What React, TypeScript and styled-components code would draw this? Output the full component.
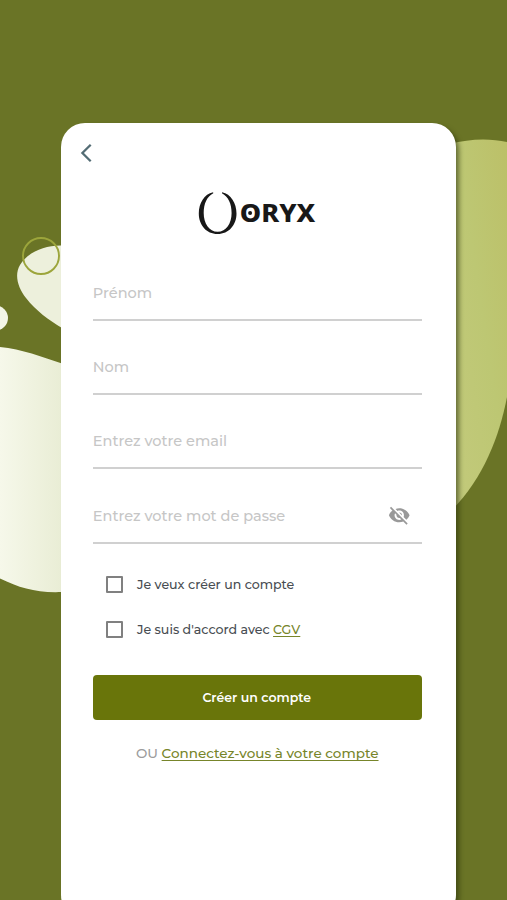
import React, { useState } from "react";
import styled, { createGlobalStyle } from "styled-components";

const GlobalStyle = createGlobalStyle`
  * { box-sizing: border-box; }
  body { margin: 0; overflow: hidden; }
  button, input { font-family: inherit; }
`;

const Page = styled.main`
  position: relative;
  width: 507px;
  height: 900px;
  overflow: hidden;
  background: #6a7426;
  padding: 122.6px 51.3px 0 61.3px;
  font-family: Montserrat, Inter, sans-serif;
`;

const Backdrop = styled.svg`
  position: absolute;
  inset: 0;
`;

const Card = styled.section`
  position: relative;
  display: flex;
  flex-direction: column;
  height: 796px;
  padding: 18.4px 34px 0 31.5px;
  border-radius: 24px;
  background: #fff;
  box-shadow: 4px 3px 5px -1px rgba(40, 48, 10, 0.6);
`;

const BackButton = styled.button`
  display: flex;
  width: 24px;
  height: 24px;
  margin-left: -19.3px;
  padding: 0;
  border: 0;
  background: none;
`;

const Logo = styled.svg`
  display: block;
  align-self: center;
  flex: none;
  margin: 26px 0 11.5px 1px;
`;

const Form = styled.form`
  display: flex;
  flex-direction: column;
`;

const Field = styled.label`
  display: flex;
  align-items: center;
  height: 74.3px;
  padding: 20px 11px 0 0;
  border-bottom: 2px solid #d0d0d0;
`;

const Input = styled.input`
  flex: 1;
  min-width: 0;
  padding: 0;
  border: 0;
  outline: 0;
  background: none;
  font-size: 14.5px;
  font-weight: 500;
  line-height: 20px;
  &::placeholder {
    color: #c6c6c6;
    opacity: 1;
  }
`;

const Checks = styled.div`
  display: flex;
  flex-direction: column;
  gap: 24.5px;
  padding: 31px 0 0 13.7px;
`;

const CheckRow = styled.label`
  display: flex;
  align-items: center;
  height: 20px;
  gap: 13.5px;
  color: #484d52;
  font-size: 12.6px;
  font-weight: 500;
  white-space: pre;
`;

const Box = styled.input`
  appearance: none;
  width: 17px;
  height: 17px;
  margin: 0;
  border: 2px solid #808080;
  border-radius: 1px;
`;

const Link = styled.a`
  color: #77852a;
  text-decoration: underline;
  text-decoration-thickness: 1px;
  text-underline-offset: 1.5px;
`;

const Submit = styled.button`
  height: 45px;
  margin-top: 35.5px;
  padding: 1px 1px 0 0;
  border: 0;
  border-radius: 4px;
  background: #69750a;
  color: #fff;
  font-size: 12.5px;
  font-weight: 600;
`;

const Footer = styled.p`
  margin: 23.5px 0 0;
  text-align: center;
  color: #9c9c9c;
  font-size: 13.5px;
  font-weight: 500;
  line-height: 20px;
  white-space: nowrap;
`;

const fields = ["Prénom", "Nom", "Entrez votre email", "Entrez votre mot de passe"];

const Shapes = () => (
  <Backdrop width="507" height="900" viewBox="0 0 507 900" aria-hidden="true">
    <defs>
      <linearGradient id="pale" x1="0" x2="1">
        <stop offset="0" stopColor="#f6f8ea" />
        <stop offset="1" stopColor="#e9edd5" />
      </linearGradient>
      <linearGradient id="lime" x1="0" y1="1" x2="1" y2="0">
        <stop offset="0" stopColor="#c3ca7c" />
        <stop offset="0.55" stopColor="#bdc773" />
        <stop offset="1" stopColor="#bcc068" />
      </linearGradient>
    </defs>
    <path d="M62 245.5C45 245 28 252 20 265C14 275 18 288 26 298C36 311 49 320 62 328Z" fill="#edf0dc" />
    <circle cx="-4.5" cy="318" r="12.5" fill="#f2f5e6" />
    <path d="M0 347C22 349 42 357 62 363.5V592C36 593 20 588 0 578.5Z" fill="url(#pale)" />
    <path d="M450 144C469 138.500 490 138 507 142V397C499 438 483 479 450 512Z" fill="url(#lime)" />
    <circle cx="41" cy="256" r="18" fill="none" stroke="#9ca53b" strokeWidth="1.9" />
  </Backdrop>
);

const OryxLogo = () => (
  <Logo width="120" height="44" viewBox="197.7 191 120 44" role="img" aria-label="Oryx">
    <path
      fill="#181818"
      d="M212.800 192.200C204 194 198.500 203 198.500 213.500C198.500 225 206 234 217.300 234C228.500 234 236.200 225 236.200 213.500C236.200 203 230.500 194 221.800 192.200L221.600 193.300C228 196.500 231.300 204 231.300 213C231.300 223.500 226 231.800 217.300 231.800C208.800 231.800 203.400 223.500 203.400 213C203.400 204 206.500 196.500 213 193.300Z"
    />
    <text x="239.500" y="221.500" fontFamily="'Noto Sans', sans-serif" fontWeight="800" fontSize="24" fill="#181818" textLength="75.500" lengthAdjust="spacingAndGlyphs">
      ORYX
    </text>
    <circle cx="249.800" cy="213" r="2" fill="#181818" />
  </Logo>
);

const EyeOff = () => (
  <svg width="22.500" height="22.500" viewBox="0 0 24 24" fill="#999" aria-hidden="true">
    <path d="M12 7c2.760 0 5 2.240 5 5 0 .65-.13 1.260-.36 1.830l2.920 2.920c1.510-1.260 2.700-2.890 3.430-4.750-1.730-4.390-6-7.500-11-7.500-1.400 0-2.740.25-3.980.7l2.160 2.160C10.740 7.130 11.350 7 12 7zM2 4.270l2.280 2.280.46.46C3.080 8.300 1.780 10.020 1 12c1.730 4.390 6 7.500 11 7.500 1.550 0 3.030-.3 4.380-.84l.42.42L19.730 22 21 20.730 3.270 3 2 4.270zM7.530 9.800l1.550 1.550c-.05.21-.08.43-.08.65 0 1.660 1.340 3 3 3 .22 0 .44-.03.65-.08l1.550 1.550c-.67.33-1.410.53-2.200.53-2.760 0-5-2.240-5-5 0-.79.2-1.530.53-2.200zm4.310-.78l3.150 3.150.02-.16c0-1.660-1.340-3-3-3l-.17.01z" />
  </svg>
);

export default function App() {
  const [account, setAccount] = useState(false);
  const [terms, setTerms] = useState(false);
  return (
    <>
      <GlobalStyle />
      <Page>
        <Shapes />
        <Card>
          <BackButton type="button" aria-label="Retour">
            <svg width="24" height="24" viewBox="0 0 24 24" fill="none" stroke="#536c74" strokeWidth="2.300">
              <path d="M16.700 3.700L8.400 12l8.300 8.300" />
            </svg>
          </BackButton>
          <OryxLogo />
          <Form onSubmit={(e) => e.preventDefault()}>
            {fields.map((label, i) => (
              <Field key={label}>
                <Input placeholder={label} type={i === 3 ? "password" : "text"} />
                {i === 3 && <EyeOff />}
              </Field>
            ))}
            <Checks>
              <CheckRow>
                <Box type="checkbox" checked={account} onChange={() => setAccount(!account)} />
                <span>Je veux créer un compte</span>
              </CheckRow>
              <CheckRow>
                <Box type="checkbox" checked={terms} onChange={() => setTerms(!terms)} />
                <span>
                  Je suis d'accord avec <Link>CGV</Link>
                </span>
              </CheckRow>
            </Checks>
            <Submit type="submit">Créer un compte</Submit>
          </Form>
          <Footer>
            OU <Link>Connectez-vous à votre compte</Link>
          </Footer>
        </Card>
      </Page>
    </>
  );
}
